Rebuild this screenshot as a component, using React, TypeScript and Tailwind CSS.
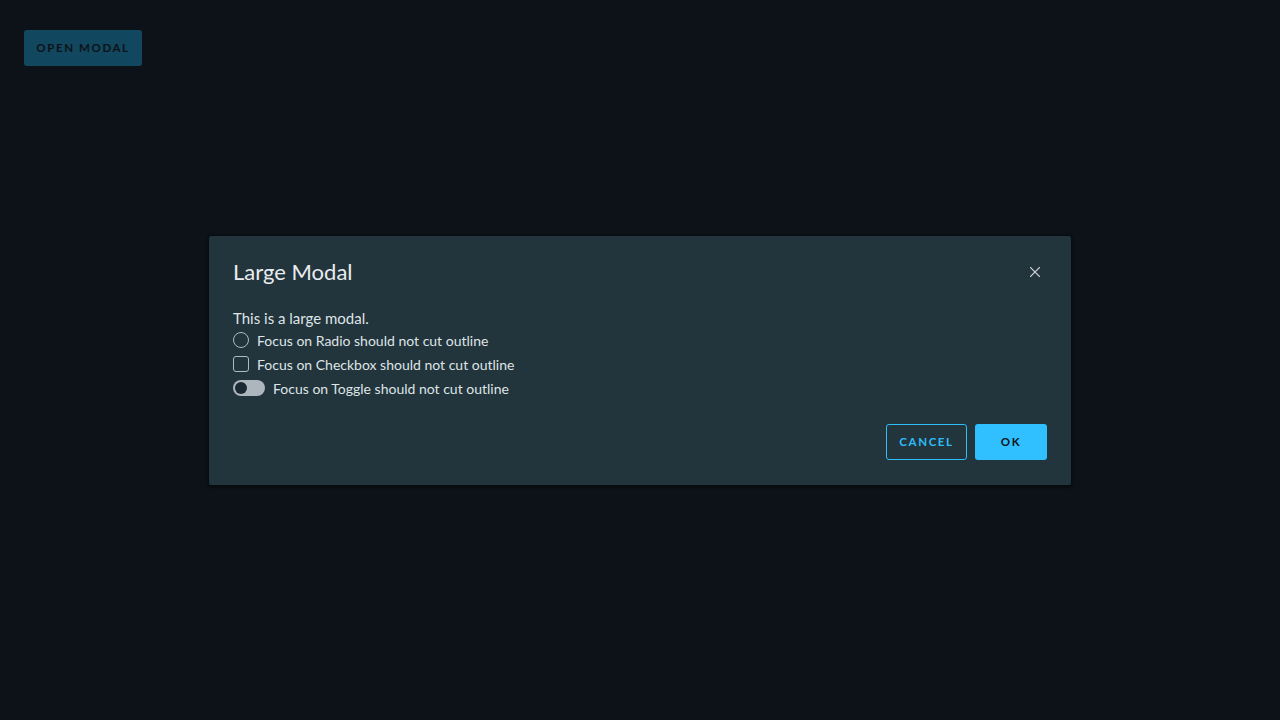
import { X } from "lucide-react";

const font = { fontFamily: "Lato, 'Open Sans', sans-serif" };

export default function App() {
  return (
    <div className="relative h-[720px] w-[1280px] bg-[#0c1217]" style={font}>
      <div className="p-6 pt-[30px]">
        <button className="h-9 w-[118px] rounded-[3px] bg-[#12485f] text-[11.5px] font-bold tracking-[0.14em] text-[#0c1217]">
          OPEN MODAL
        </button>
      </div>

      {/* modal */}
      <div className="absolute left-[208px] top-[235px] flex w-[864px] flex-col rounded-[3px] border border-[#080c0f] bg-[#22343c] px-6 pb-[25px] pt-[23px] shadow-[0_1px_3px_rgba(0,0,0,0.5)]">
        <div className="flex items-center justify-between">
          <h3 className="text-[22px] leading-[26px] text-[#e9ecef]">Large Modal</h3>
          <button className="mr-[3px] text-[#c7ced1]">
            <X className="h-[18px] w-[18px]" strokeWidth={1.5} />
          </button>
        </div>

        <div className="mt-[23px] flex flex-col text-[#dfe4e6]">
          <p className="text-[15px] leading-[20px]">This is a large modal.</p>
          <label className="flex h-6 items-center gap-2 text-[14px]">
            <span className="h-4 w-4 rounded-full border border-[#adbbc4]" />
            Focus on Radio should not cut outline
          </label>
          <label className="flex h-6 items-center gap-2 text-[14px]">
            <span className="h-4 w-4 rounded-[3px] border border-[#adbbc4]" />
            Focus on Checkbox should not cut outline
          </label>
          <label className="flex h-6 items-center gap-2 text-[14px]">
            <span className="flex h-4 w-8 items-center rounded-full bg-[#adb5bd] px-[2px]">
              <span className="h-3 w-3 rounded-full bg-[#1b2a32]" />
            </span>
            Focus on Toggle should not cut outline
          </label>
        </div>

        <div className="mt-6 flex justify-end gap-2">
          <button className="h-9 w-[81px] rounded-[3px] border border-[#2fbdf8] text-[11.5px] font-bold tracking-[0.14em] text-[#2fbdf8]">
            CANCEL
          </button>
          <button className="h-9 w-[72px] rounded-[3px] bg-[#30c0ff] text-[11.5px] font-bold tracking-[0.14em] text-[#0c1217]">
            OK
          </button>
        </div>
      </div>
    </div>
  );
}
